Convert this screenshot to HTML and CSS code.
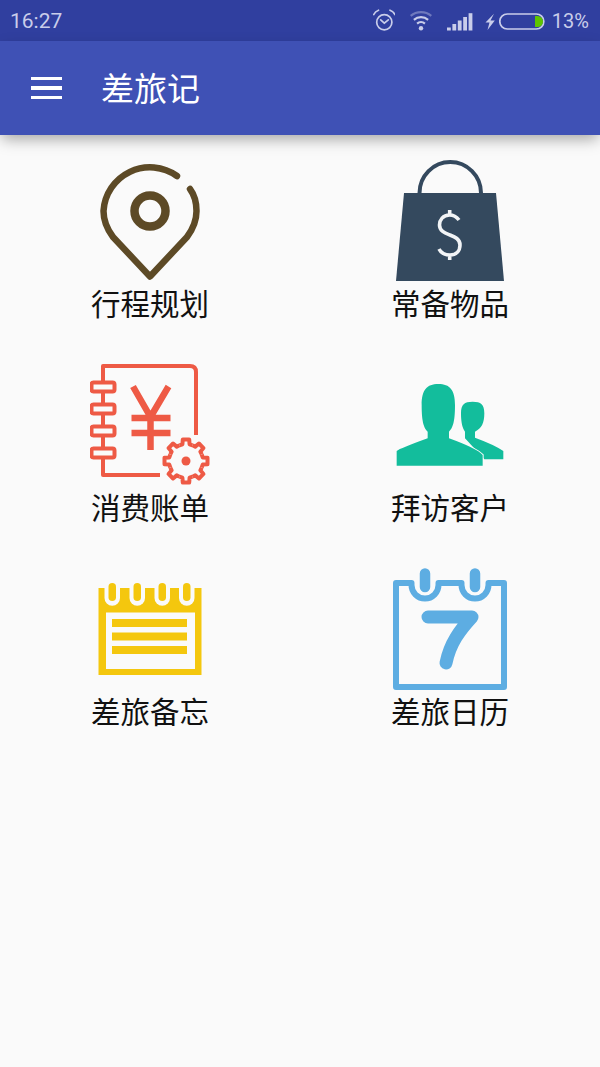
FILE: index.html
```html
<!DOCTYPE html>
<html lang="zh-CN">
<head>
    <meta charset="UTF-8">
    <meta name="viewport" content="width=device-width, initial-scale=1.0">
    <title>差旅记</title>
    <link rel="stylesheet" href="styles.css">
</head>
<body>
    <div class="status-bar">
        <span class="status-time">16:27</span>
        <div class="status-icons">
            <svg class="icon-alarm" width="22" height="24" viewBox="0 0 22 24" fill="none" stroke="#c9cdea" stroke-width="1.7" stroke-linecap="round">
                <circle cx="11.3" cy="13.2" r="7.6"/>
                <path d="M.8 5.500Q2 2.500 5.500 1.200M17 1.200Q20.500 2.500 21.800 5.500M7.700 10.800l3.600 3.400 4-3.400"/>
            </svg>
            <svg class="icon-wifi" width="26" height="24" viewBox="0 0 26 24" fill="none" stroke="#c9cdea" stroke-width="2.200">
                <circle cx="13" cy="19.2" r="2.200" fill="#c9cdea" stroke="none"/>
                <path d="M9.100 14.600a6 6 0 0 1 7.800 0M5.900 10.800a11 11 0 0 1 14.200 0"/>
                <path d="M2.700 6.900a16 16 0 0 1 20.600 0" stroke="#6f79bd"/>
            </svg>
            <svg class="icon-signal" width="26" height="24" viewBox="0 0 26 24" fill="#c9cdea">
                <rect x="0" y="18.500" width="3.800" height="3"/>
                <rect x="5.400" y="15" width="3.800" height="6.500"/>
                <rect x="10.800" y="11.500" width="3.800" height="10"/>
                <rect x="16.200" y="8" width="3.800" height="13.500"/>
                <rect x="21.600" y="4.200" width="3.800" height="17.300"/>
            </svg>
            <svg class="icon-bolt" width="10" height="24" viewBox="0 0 10 24" fill="#c9cdea">
                <polygon points="9,4.800 .5,13.500 4.500,13.500 2.500,21 9.800,11.500 5.500,11.500"/>
            </svg>
            <svg class="icon-battery" width="46" height="24" viewBox="0 0 46 24" fill="none">
                <rect x=".8" y="5" width="44" height="15" rx="7.500" stroke="#c9cdea" stroke-width="1.700"/>
                <path d="M36 7h2.500a5.500 5.500 0 0 1 0 11H36z" fill="#5ec400"/>
            </svg>
            <span class="status-percent">13%</span>
        </div>
    </div>

    <header class="toolbar">
        <div class="menu-btn"><span></span><span></span><span></span></div>
        <h1>差旅记</h1>
    </header>

    <main class="menu-grid">
        <a class="menu-item" href="#">
            <svg width="120" height="124" viewBox="0 0 120 124" fill="none" stroke="#5d4a26" stroke-width="6.500" stroke-linecap="round" stroke-linejoin="round">
                <path d="M87 16A46.500 46.500 0 0 0 13.500 51C13.500 61 17 69 23 77L60 116.500 97 77C103 69 106.500 61 106.500 51 106.500 43 104.500 35 100 29"/>
                <circle cx="60" cy="51" r="15.500" stroke-width="8.500"/>
            </svg>
            <span>行程规划</span>
        </a>
        <a class="menu-item" href="#">
            <svg width="120" height="124" viewBox="0 0 120 124" fill="none">
                <path d="M29.500 33A30.750 31 0 0 1 91 33" stroke="#34495e" stroke-width="4"/>
                <polygon points="14,33 106,33 114,121 6,121" fill="#34495e"/>
                <path d="M69 60C66 56 63 55 59.500 55 53 55 49.500 60 49.500 65 49.500 71 55 73 60 75 65 77 70 79 70 85 70 91 66 95 60 95 55 95 51 93 49 89M59.700 50V55M59.700 95V100" stroke="#f2f4f6" stroke-width="3.600"/>
            </svg>
            <span>常备物品</span>
        </a>
        <a class="menu-item" href="#">
            <svg width="120" height="124" viewBox="0 0 120 124" fill="none" stroke="#ee5a45" stroke-width="4" stroke-linejoin="round">
                <path d="M13 19V2H100Q106 2 106 8V71M70 111H13V93M13 27V41M13 49V63M13 71V85"/>
                <rect x="1.500" y="18.500" width="23" height="9" rx="2"/>
                <rect x="1.500" y="40.500" width="23" height="9" rx="2"/>
                <rect x="1.500" y="62.500" width="23" height="9" rx="2"/>
                <rect x="1.500" y="84.500" width="23" height="9" rx="2"/>
                <path d="M43 22.500 60.500 53 78.500 22.500M60.500 53V86M41.500 54H80.500M41.500 69H80.500" stroke-width="6.500"/>
                <g transform="translate(96 97)">
                    <circle r="17" fill="#fafafa" stroke="none"/>
                    <path id="gear-tooth" d="M-6.500-15.700-3.600-16.700-3.200-21.500H3.200L3.600-16.700 6.500-15.700"/>
                    <use href="#gear-tooth" transform="rotate(45)"/>
                    <use href="#gear-tooth" transform="rotate(90)"/>
                    <use href="#gear-tooth" transform="rotate(135)"/>
                    <use href="#gear-tooth" transform="rotate(180)"/>
                    <use href="#gear-tooth" transform="rotate(225)"/>
                    <use href="#gear-tooth" transform="rotate(270)"/>
                    <use href="#gear-tooth" transform="rotate(315)"/>
                    <circle r="4.500" fill="#ee5a45" stroke="none"/>
                </g>
            </svg>
            <span>消费账单</span>
        </a>
        <a class="menu-item" href="#">
            <svg width="120" height="124" viewBox="0 0 120 124" fill="#13bd9c">
                <g transform="translate(-10 6) scale(.3333)">
                    <path d="M313 268H370V243Q345 225 285 203V185C305 175 313 160 313 130 313 103 303 95 278 95 253 95 243 103 243 130 243 160 248 175 255 185V205Z"/>
                    <path d="M50 287V243Q60 235 143 205V185C133 175 125 160 125 105 125 60 140 42 175 42 210 42 225 60 225 105 225 160 217 175 207 185V205Q290 235 308 255V287Z" stroke="#fafafa" stroke-width="6" paint-order="stroke"/>
                </g>
            </svg>
            <span>拜访客户</span>
        </a>
        <a class="menu-item" href="#">
            <svg width="120" height="124" viewBox="0 0 120 124" fill="#f4c70e">
                <rect x="8.500" y="20" width="103" height="87"/>
                <rect x="16" y="44.500" width="89" height="56.500" fill="#fafafa"/>
                <g fill="#fafafa">
                    <path d="M14.500 20H30V30A7.750 7.750 0 0 1 14.500 30Z"/>
                    <path d="M39.500 20H55V30A7.750 7.750 0 0 1 39.500 30Z"/>
                    <path d="M64.500 20H80V30A7.750 7.750 0 0 1 64.500 30Z"/>
                    <path d="M89 20H104.500V30A7.750 7.750 0 0 1 89 30Z"/>
                </g>
                <rect x="18.500" y="15" width="7.500" height="18" rx="3.750"/>
                <rect x="43.500" y="15" width="7.500" height="18" rx="3.750"/>
                <rect x="68.500" y="15" width="7.500" height="18" rx="3.750"/>
                <rect x="93" y="15" width="7.500" height="18" rx="3.750"/>
                <rect x="22" y="51" width="75" height="8"/>
                <rect x="22" y="64.500" width="75" height="8"/>
                <rect x="22" y="78" width="75" height="8"/>
            </svg>
            <span>差旅备忘</span>
        </a>
        <a class="menu-item" href="#">
            <svg width="120" height="124" viewBox="0 0 120 124" fill="none" stroke="#5dade2" stroke-linecap="round" stroke-linejoin="round">
                <path d="M6 15H21.500V17A13.500 13.500 0 0 0 48.500 17V15H71.500V17A13.500 13.500 0 0 0 98.500 17V15H114V119H6Z" stroke-width="6"/>
                <path d="M35 5.500V19M85 5.500V19" stroke-width="10.500"/>
                <path d="M38 49H82C70 62 60 75 56 95" stroke-width="13"/>
            </svg>
            <span>差旅日历</span>
        </a>
    </main>
</body>
</html>
```

FILE: styles.css
```css
* {
    margin: 0;
    padding: 0;
    box-sizing: border-box;
}

html, body {
    height: 100%;
    overflow: hidden;
}

body {
    background-color: #fafafa;
    font-family: "Noto Sans CJK SC", "Noto Sans", sans-serif;
    color: #111;
}

/* Status bar */
.status-bar {
    height: 41px;
    padding: 0 11px 0 10px;
    background-color: #303f9f;
    color: #c9cdea;
    font-family: Roboto, sans-serif;
    display: flex;
    align-items: center;
    justify-content: space-between;
}

.status-time {
    font-size: 21px;
}

.status-icons {
    display: flex;
    align-items: center;
}

.icon-wifi, .icon-signal {
    margin-left: 13px;
}

.icon-bolt {
    margin-left: 12px;
}

.icon-battery {
    margin-left: 4px;
}

.status-percent {
    margin-left: 7px;
    font-size: 20px;
}

/* Toolbar */
.toolbar {
    height: 94px;
    padding-left: 31px;
    background-color: #3f51b5;
    color: #fff;
    display: flex;
    align-items: center;
    gap: 39px;
    box-shadow: 0 6px 14px -2px rgba(0, 0, 0, 0.35);
    position: relative;
}

.toolbar h1 {
    font-size: 33px;
    font-weight: 400;
    line-height: 1;
    position: relative;
    top: -1px;
}

.menu-btn {
    width: 31px;
    display: flex;
    flex-direction: column;
    gap: 6px;
}

.menu-btn span {
    height: 3.500px;
    background-color: #fff;
}

/* Menu */
.menu-grid {
    padding-top: 25px;
    display: grid;
    grid-template-columns: 1fr 1fr;
    row-gap: 40px;
}

.menu-item {
    display: flex;
    flex-direction: column;
    align-items: center;
    color: inherit;
    text-decoration: none;
}

/* source icons are soft, scaled-up bitmaps */
.menu-item svg {
    filter: blur(0.5px);
}

.menu-item span {
    font-size: 29.500px;
    line-height: 36px;
    margin-bottom: 4px;
}
```
